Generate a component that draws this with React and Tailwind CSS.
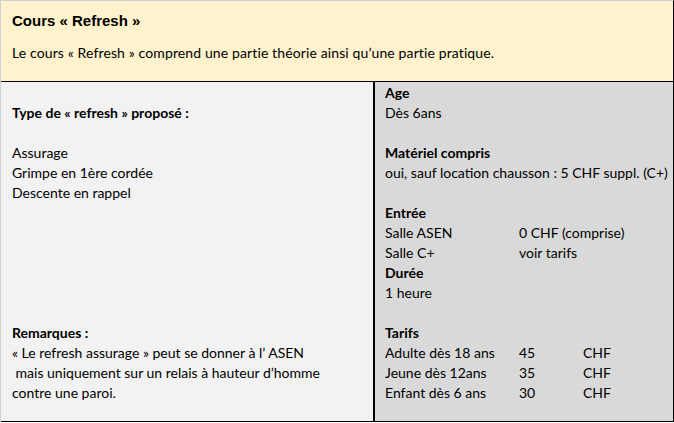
import React from 'react'

const body = { fontFamily: 'Lato, "Open Sans", sans-serif' }

function Row({ children, bold, className = '' }) {
  return (
    <div className={`h-5 leading-5 whitespace-pre ${bold ? 'font-bold' : ''} ${className}`}>
      {children}
    </div>
  )
}

function Cols({ a, b, c }) {
  return (
    <div className="flex h-5 leading-5 whitespace-pre">
      <span className="w-[134px]">{a}</span>
      <span className="w-[64px]">{b}</span>
      {c && <span>{c}</span>}
    </div>
  )
}

export default function App() {
  return (
    <div className="w-[674px] h-[423px] bg-white text-black text-[14px] overflow-hidden" style={body}>
      <div className="border-t border-l border-[#d0d0d0] border-r border-r-black h-[422px] flex flex-col">
        <div className="h-[81px] bg-[#fff2cc] px-[11px] border-b border-black shrink-0">
          <div
            className="pt-[11px] text-[15px] font-bold leading-[18px]"
            style={{ fontFamily: '"Liberation Sans", Arial, sans-serif' }}
          >
            Cours « Refresh »
          </div>
          <div className="mt-[13px] leading-5 tracking-[0.12px]">
            Le cours « Refresh » comprend une partie théorie ainsi qu’une partie pratique.
          </div>
        </div>
        <div className="flex flex-1 border-b border-black">
          <div className="w-[372px] bg-[#f2f2f2] pl-[11px] pt-[1px]">
            <Row> </Row>
            <Row bold>Type de « refresh » proposé :</Row>
            <Row> </Row>
            <Row>Assurage</Row>
            <Row>Grimpe en 1ère cordée</Row>
            <Row>Descente en rappel</Row>
            <div className="h-[120px]" />
            <Row bold>Remarques :</Row>
            <Row>« Le refresh assurage » peut se donner à l’ ASEN</Row>
            <Row> mais uniquement sur un relais à hauteur d’homme</Row>
            <Row>contre une paroi.</Row>
          </div>
          <div className="w-[2px] bg-black" />
          <div className="flex-1 bg-[#d9d9d9] pl-[10px] pt-[1px]">
            <Row bold>Age</Row>
            <Row>Dès 6ans</Row>
            <Row> </Row>
            <Row bold>Matériel compris</Row>
            <Row>oui, sauf location chausson : 5 CHF suppl. (C+)</Row>
            <Row> </Row>
            <Row bold>Entrée</Row>
            <Cols a="Salle ASEN" b="0 CHF (comprise)" />
            <Cols a="Salle C+" b="voir tarifs" />
            <Row bold>Durée</Row>
            <Row>1 heure</Row>
            <Row> </Row>
            <Row bold>Tarifs</Row>
            <Cols a="Adulte dès 18 ans" b="45" c="CHF" />
            <Cols a="Jeune dès 12ans" b="35" c="CHF" />
            <Cols a="Enfant dès 6 ans" b="30" c="CHF" />
          </div>
        </div>
      </div>
    </div>
  )
}
